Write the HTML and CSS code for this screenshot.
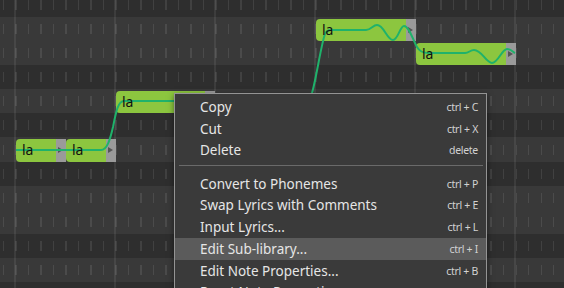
FILE: index.html
```html
<!DOCTYPE html>
<html lang="en">
<head>
    <meta charset="UTF-8">
    <title>Piano Roll</title>
    <link rel="stylesheet" href="styles.css">
</head>
<body>
<div class="editor">
    <div class="grid">
        <div class="row black"></div>
        <div class="row"></div>
        <div class="row"></div>
        <div class="row black"></div>
        <div class="row"></div>
        <div class="row black"></div>
        <div class="row"></div>
        <div class="row black"></div>
        <div class="row"></div>
        <div class="row"></div>
        <div class="row black"></div>
        <div class="row"></div>
        <div class="row black"></div>
    </div>

    <!-- notes -->
    <div class="note n1"><span class="lyric">la</span><span class="grip"></span></div>
    <div class="note n2"><span class="lyric">la</span><span class="grip"></span></div>
    <div class="note n3"><span class="lyric">la</span><span class="grip"></span></div>
    <div class="note n4"><span class="lyric">la</span><span class="grip"></span></div>
    <div class="note n5"><span class="lyric">la</span><span class="grip"></span></div>

    <!-- pitch curve -->
    <svg class="pitch" width="564" height="288" viewBox="0 0 564 288">
        <path d="M16,150 H101 C107,150 110,140 113,127 C116,112 118,101 124,101 H296 C305,101 308,100 312,93 C316,80 321,45 325,34 C326,31 328,30 331,30 H366 C371,30 373,25 377,25 C384,25 387,40 393,40 C398,40 400,26 404,26 C409,26 413,40 417,47 C420,52 423,53 428,53 H465 C469,53 470,50 474,50 C482,50 486,63 492,63 C498,63 502,49 507,49 C511,49 513,52 515,53" />
    </svg>

    <div class="menu">
        <div class="item"><span>Copy</span><span class="key">ctrl + C</span></div>
        <div class="item"><span>Cut</span><span class="key">ctrl + X</span></div>
        <div class="item"><span>Delete</span><span class="key">delete</span></div>
        <div class="sep"></div>
        <div class="item"><span>Convert to Phonemes</span><span class="key">ctrl + P</span></div>
        <div class="item"><span>Swap Lyrics with Comments</span><span class="key">ctrl + E</span></div>
        <div class="item"><span>Input Lyrics...</span><span class="key">ctrl + L</span></div>
        <div class="item active"><span>Edit Sub-library...</span><span class="key">ctrl + I</span></div>
        <div class="item"><span>Edit Note Properties...</span><span class="key">ctrl + B</span></div>
        <div class="item"><span>Reset Note Properties</span><span class="key"></span></div>
    </div>
</div>
</body>
</html>
```

FILE: styles.css
```css
body {
    margin: 0;
    background-color: #2e2e2e;
    font-family: "Noto Sans", "DejaVu Sans", sans-serif;
}
.editor {
    position: relative;
    width: 564px;
    height: 288px;
    overflow: hidden;
}
.grid {
    display: flex;
    flex-direction: column;
    margin-top: -7.1px;
}
.row {
    flex: none;
    height: 24.1px;
    background-color: #393939;
    background-image:
        repeating-linear-gradient(90deg, transparent 0 14px, rgba(255, 255, 255, 0.07) 14px 16px, transparent 16px 100px),
        repeating-linear-gradient(90deg, rgba(255, 255, 255, 0.09) 0 1px, transparent 1px 12.5px);
    background-size: 100% 100%, 100% 10px;
    background-position: 0 0, 3px 50%;
    background-repeat: no-repeat;
}
.row.black {
    background-color: #2e2e2e;
}

/* notes */
.note {
    position: absolute;
    height: 22.5px;
    background-color: #8cc63f;
    border-radius: 4px 0 0 4px;
}
.n1 { left: 16px; top: 139px; width: 50px; }
.n2 { left: 66px; top: 139px; width: 50px; }
.n3 { left: 116px; top: 90.8px; width: 99px; }
.n4 { left: 316px; top: 18.5px; width: 100px; }
.n5 { left: 416px; top: 42.6px; width: 100px; }
.lyric {
    position: relative;
    z-index: 3;
    display: block;
    padding-left: 6px;
    font-size: 14px;
    line-height: 22.5px;
    color: #111;
}
.grip {
    position: absolute;
    top: 0;
    right: 0;
    width: 10px;
    height: 100%;
    background-color: #9a9a9a;
}
.grip::before {
    content: "";
    position: absolute;
    left: 2px;
    top: 8px;
    border-left: 5px solid #555;
    border-top: 3.5px solid transparent;
    border-bottom: 3.5px solid transparent;
}

.pitch {
    position: absolute;
    left: 0;
    top: 0;
    z-index: 2;
    fill: none;
    stroke: #1fb26b;
    stroke-width: 2;
}

/* context menu */
.menu {
    position: absolute;
    z-index: 5;
    left: 174px;
    top: 93px;
    width: 311px;
    height: 220px;
    padding-top: 2px;
    background-color: #3a3a3a;
    border: 1px solid #949494;
    box-shadow: 0 2px 6px rgba(0, 0, 0, 0.5);
    color: #e6e6e6;
}
.item {
    display: flex;
    justify-content: space-between;
    align-items: center;
    height: 21.75px;
    padding: 0 8px 0 25px;
    font-size: 13.5px;
}
.item.active {
    background-color: #5b5b5b;
}
.key {
    font-size: 10.5px;
    letter-spacing: -0.3px;
    color: #d2d2d2;
}
.sep {
    height: 1px;
    margin: 3.75px 3px 6.75px 4px;
    background-color: #6a6a6a;
}
```
